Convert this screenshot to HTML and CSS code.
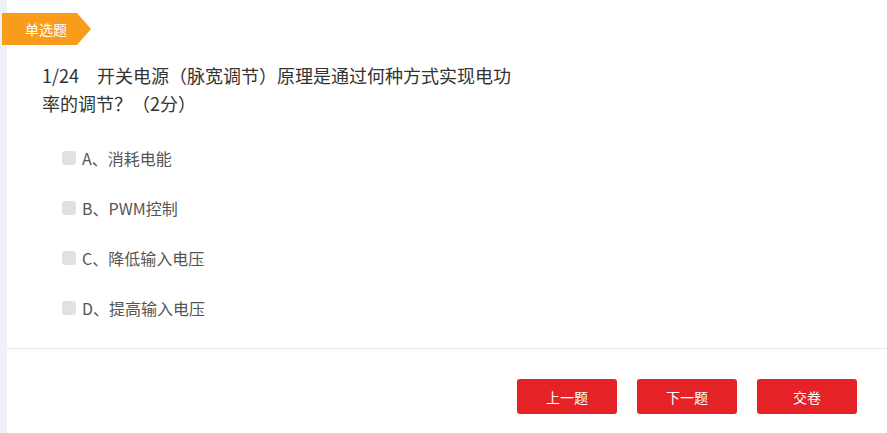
FILE: index.html
```html
<!DOCTYPE html>
<html lang="zh-CN">
<head>
    <meta charset="UTF-8">
    <meta name="viewport" content="width=device-width, initial-scale=1.0">
    <title>单选题</title>
    <link rel="stylesheet" href="styles.css">
</head>
<body>
    <div class="page">
        <div class="tag">单选题</div>

        <div class="question">1/24　开关电源（脉宽调节）原理是通过何种方式实现电功率的调节？（2分）</div>

        <ul class="options">
            <li class="option"><span class="check"></span>A、消耗电能</li>
            <li class="option"><span class="check"></span>B、PWM控制</li>
            <li class="option"><span class="check"></span>C、降低输入电压</li>
            <li class="option"><span class="check"></span>D、提高输入电压</li>
        </ul>

        <div class="footer">
            <button class="btn">上一题</button>
            <button class="btn">下一题</button>
            <button class="btn">交卷</button>
        </div>
    </div>
</body>
</html>
```

FILE: styles.css
```css
html, body {
    margin: 0;
    padding: 0;
    background: #fff;
}
body {
    font-family: "Microsoft YaHei", "Noto Sans CJK SC", "Noto Sans", sans-serif;
    color: #333;
}
.page {
    border-left: 7px solid #eef2f6;
    min-height: 433px;
    box-sizing: border-box;
    padding-top: 13px;
}
.tag {
    position: relative;
    margin-left: -5px;
    width: 89px;
    height: 32px;
    box-sizing: border-box;
    padding-left: 23px;
    background: #fa9c1b;
    color: #fff;
    font-size: 14px;
    line-height: 32px;
    clip-path: polygon(0 0, 75px 0, 89px 16px, 75px 32px, 0 32px);
}
.question {
    width: 475px;
    margin: 16px 0 0 35px;
    font-size: 18px;
    line-height: 28px;
    color: #333;
}
.options {
    list-style: none;
    margin: 16px 0 0 55px;
    padding: 0;
}
.option {
    display: flex;
    align-items: center;
    height: 50px;
    font-size: 16px;
    color: #555;
}
.check {
    width: 14px;
    height: 14px;
    border-radius: 3px;
    background: #e1e1e1;
    margin-right: 6px;
}
.footer {
    margin-top: 15px;
    border-top: 1px solid #e6e6e6;
    padding: 30px 30px 0 0;
    display: flex;
    justify-content: flex-end;
    gap: 20px;
}
.btn {
    width: 100px;
    height: 35px;
    border: none;
    border-radius: 3px;
    background: #e52226;
    color: #fff;
    font-family: inherit;
    font-size: 14px;
    cursor: pointer;
}
```
